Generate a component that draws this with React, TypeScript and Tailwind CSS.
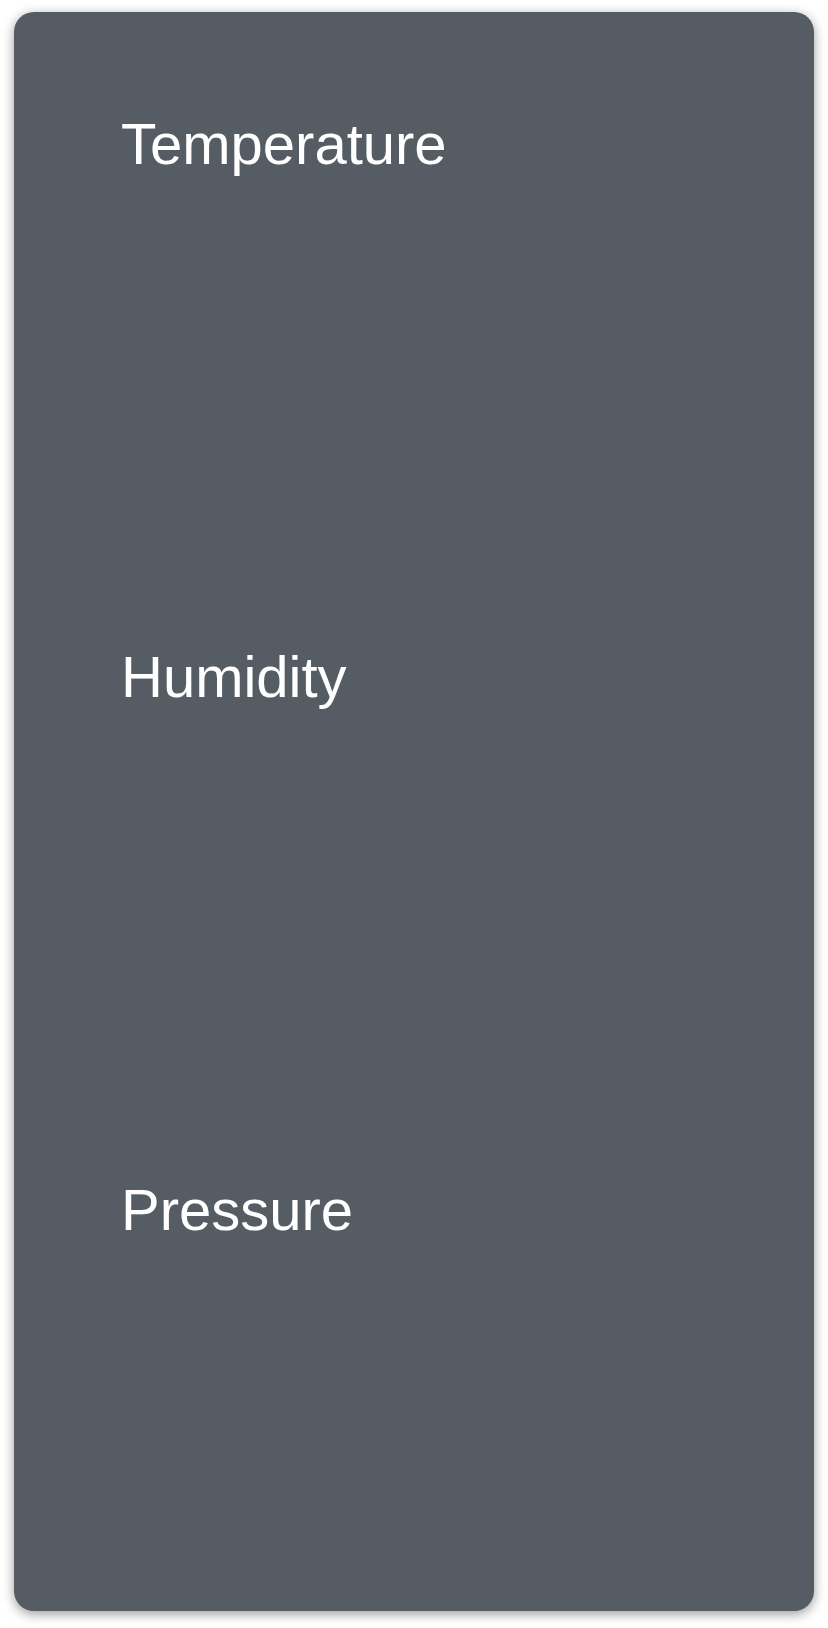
import React from 'react';

const sections = ['Temperature', 'Humidity', 'Pressure'];

export default function App() {
  return (
    <div className="min-h-screen bg-white px-[14px] pt-[12px] pb-[17px]">
      <div className="flex flex-col rounded-[20px] bg-[#555c64] shadow-[0_3px_12px_rgba(0,0,0,0.4)]">
        {sections.map((title) => (
          <section key={title} className="h-[533px] pl-[107px] pt-[103px]">
            <h2 className="font-['Liberation_Sans',Arial,sans-serif] text-[58px] leading-none font-normal text-white">
              {title}
            </h2>
          </section>
        ))}
      </div>
    </div>
  );
}
